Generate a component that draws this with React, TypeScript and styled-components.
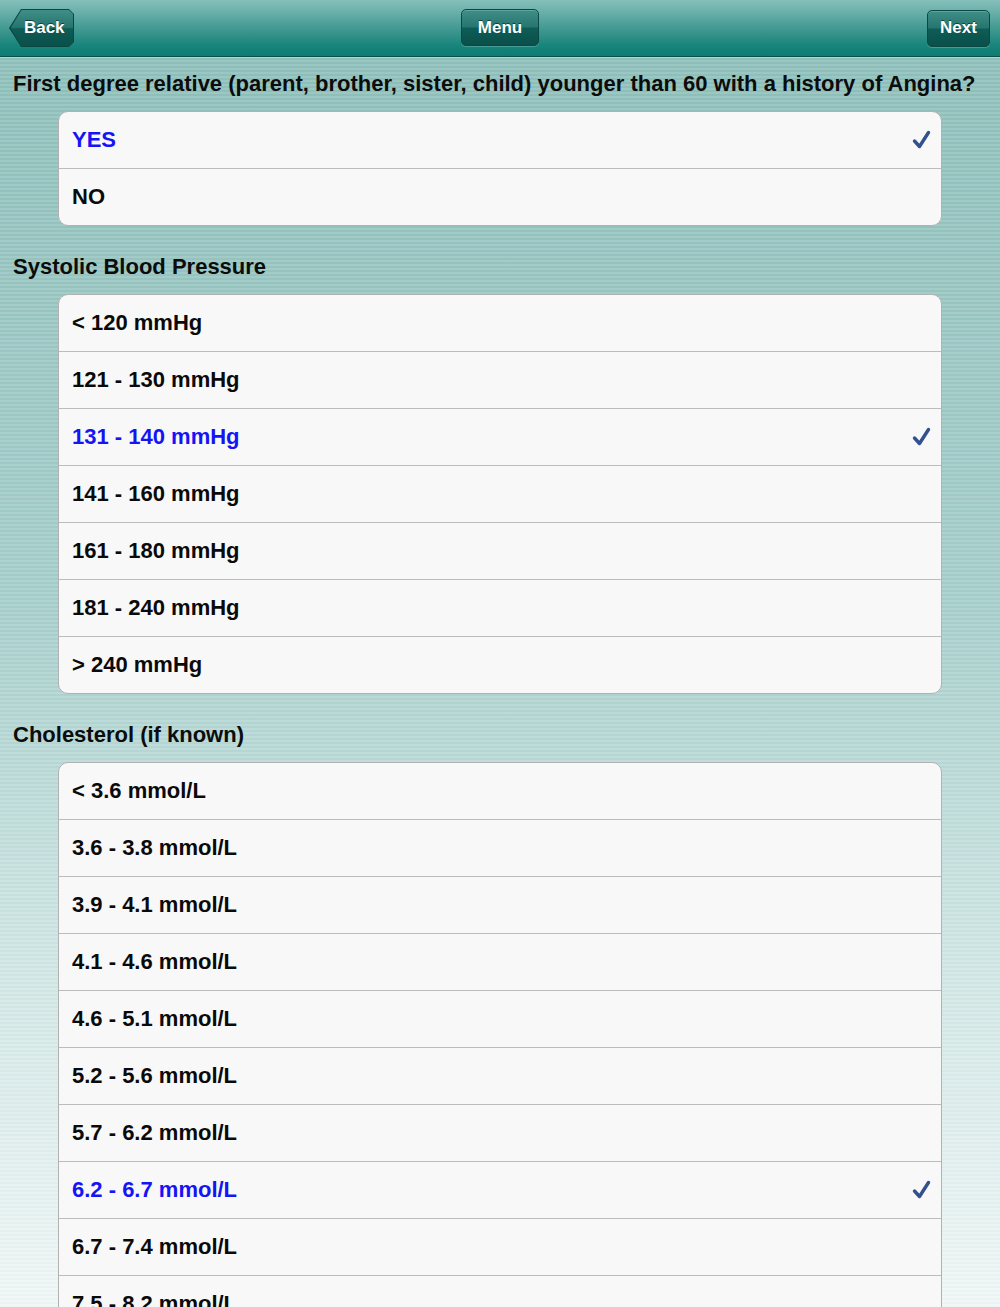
import * as React from 'react';
import styled, { createGlobalStyle } from 'styled-components';

const GlobalStyle = createGlobalStyle`
  html, body {
    margin: 0;
    padding: 0;
    height: 100%;
    overflow: hidden;
  }
  body {
    font-family: "Liberation Sans", Arial, sans-serif;
  }
`;

const Screen = styled.div`
  height: 100vh;
  overflow: hidden;
  background:
    repeating-linear-gradient(to bottom, rgba(255,255,255,0.10) 0 2px, rgba(0,0,0,0.015) 2px 4px),
    linear-gradient(to bottom, #8dbfba 0%, #a6cecb 45%, #d2e8e6 75%, #f0f7f7 100%);
`;

const NavBar = styled.div`
  height: 56px;
  border-bottom: 1px solid #0b4e49;
  box-shadow: 0 1px 0 rgba(255,255,255,0.25);
  background: linear-gradient(to bottom, #86c0bb 0%, #4a9e97 45%, #1a857c 80%, #0c7b72 100%);
  display: flex;
  align-items: center;
  justify-content: space-between;
  padding: 0 10px;
  position: relative;
`;

const ButtonFace = styled.div<{ $width: number }>`
  width: ${p => p.$width}px;
  height: 37px;
  box-sizing: border-box;
  border: 1px solid #0a4844;
  border-radius: 5px;
  background: linear-gradient(to bottom, #3f8f88 0%, #26756f 48%, #0f5c56 52%, #0a4f4a 100%);
  box-shadow: inset 0 1px 0 rgba(255,255,255,0.18), 0 1px 0 rgba(255,255,255,0.2);
  display: flex;
  align-items: center;
  justify-content: center;
  color: #fff;
  font-size: 17px;
  font-weight: bold;
  text-shadow: 0 -1px 0 rgba(0,0,0,0.5);
`;

const BackOuter = styled.div`
  width: 65px;
  height: 38px;
  background: #0a4844;
  clip-path: polygon(12px 0, calc(100% - 5px) 0, 100% 5px, 100% calc(100% - 5px), calc(100% - 5px) 100%, 12px 100%, 0 50%);
  display: flex;
  padding: 1px 1px 1px 1.5px;
  box-sizing: border-box;
  margin-left: -1px;
`;

const BackInner = styled.div`
  flex: 1;
  clip-path: polygon(11px 0, calc(100% - 4px) 0, 100% 4px, 100% calc(100% - 4px), calc(100% - 4px) 100%, 11px 100%, 0 50%);
  background: linear-gradient(to bottom, #3f8f88 0%, #26756f 48%, #0f5c56 52%, #0a4f4a 100%);
  display: flex;
  align-items: center;
  justify-content: center;
  padding-left: 5px;
  color: #fff;
  font-size: 17px;
  font-weight: bold;
  text-shadow: 0 -1px 0 rgba(0,0,0,0.5);
`;

const MenuSlot = styled.div`
  position: absolute;
  left: 461px;
  top: 9px;
`;

const Content = styled.div`
  padding: 0;
`;

const Section = styled.div<{ $first?: boolean }>`
  padding-top: ${p => (p.$first ? 12 : 26)}px;
`;

const Heading = styled.div`
  padding-left: 13px;
  height: 30px;
  line-height: 30px;
  font-size: 22px;
  font-weight: bold;
  color: #0c0c0c;
  white-space: nowrap;
  margin-bottom: 12px;
`;

const Card = styled.div`
  margin-left: 58px;
  width: 884px;
  box-sizing: border-box;
  border: 1px solid #b2b2b2;
  border-radius: 10px;
  background: #f8f8f8;
  overflow: hidden;
`;

const Row = styled.div<{ $selected?: boolean }>`
  height: 56px;
  display: flex;
  align-items: center;
  justify-content: space-between;
  padding: 0 8px 0 13px;
  font-size: 22px;
  font-weight: bold;
  color: ${p => (p.$selected ? '#1414f5' : '#0a0a0a')};
  & + & {
    border-top: 1px solid #bcbcbc;
  }
`;

const Check = () => (
  <svg width="22" height="22" viewBox="0 0 22 22">
    <path d="M3.5 12 L8.5 17.5 L17.5 3.5" fill="none" stroke="#33508f" strokeWidth="3.4" strokeLinecap="round" strokeLinejoin="round" />
  </svg>
);

interface Question {
  title: string
  options: string[]
  selected: number
}

const questions: Question[] = [
  {
    title: 'First degree relative (parent, brother, sister, child) younger than 60 with a history of Angina?',
    options: ['YES', 'NO'],
    selected: 0,
  },
  {
    title: 'Systolic Blood Pressure',
    options: ['< 120 mmHg', '121 - 130 mmHg', '131 - 140 mmHg', '141 - 160 mmHg', '161 - 180 mmHg', '181 - 240 mmHg', '> 240 mmHg'],
    selected: 2,
  },
  {
    title: 'Cholesterol (if known)',
    options: [
      '< 3.6 mmol/L', '3.6 - 3.8 mmol/L', '3.9 - 4.1 mmol/L', '4.1 - 4.6 mmol/L', '4.6 - 5.1 mmol/L',
      '5.2 - 5.6 mmol/L', '5.7 - 6.2 mmol/L', '6.2 - 6.7 mmol/L', '6.7 - 7.4 mmol/L', '7.5 - 8.2 mmol/L', '> 8.2 mmol/L',
    ],
    selected: 7,
  },
];

const App = () => {
  return <Screen>
    <GlobalStyle />
    <NavBar>
      <BackOuter><BackInner>Back</BackInner></BackOuter>
      <MenuSlot><ButtonFace $width={78}>Menu</ButtonFace></MenuSlot>
      <ButtonFace $width={63}>Next</ButtonFace>
    </NavBar>
    <Content>
      {questions.map((q, qi) => (
        <Section key={q.title} $first={qi === 0}>
          <Heading>{q.title}</Heading>
          <Card>
            {q.options.map((opt, i) => (
              <Row key={opt} $selected={i === q.selected}>
                <span>{opt}</span>
                {i === q.selected && <Check />}
              </Row>
            ))}
          </Card>
        </Section>
      ))}
    </Content>
  </Screen>
}

export default App;
